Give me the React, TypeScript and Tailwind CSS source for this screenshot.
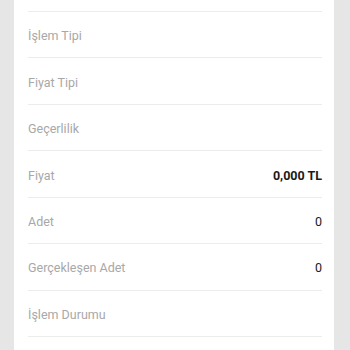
const ROWS = [
  { label: "İşlem Tipi", value: "" },
  { label: "Fiyat Tipi", value: "" },
  { label: "Geçerlilik", value: "" },
  { label: "Fiyat", value: "0,000 TL", bold: true },
  { label: "Adet", value: "0" },
  { label: "Gerçekleşen Adet", value: "0" },
  { label: "İşlem Durumu", value: "" },
];

export default function App() {
  return (
    <div
      className="h-[350px] w-[350px] overflow-hidden bg-[#e6e6e6] px-[14px]"
      style={{ fontFamily: "Roboto, 'Noto Sans', sans-serif" }}
    >
      <div className="h-full w-[320px] bg-white pl-[14px] pr-[12px]">
        {/* tail of the row above */}
        <div className="h-[12px] border-b border-[#ececec]" />
        {ROWS.map((r) => (
          <div
            key={r.label}
            className="flex h-[46.43px] items-center justify-between border-b border-[#ececec] pt-[4px]"
          >
            <span className="text-[12.5px] text-[#a8a8a8]">{r.label}</span>
            {r.value && (
              <span
                className={
                  r.bold
                    ? "text-[12.5px] font-bold text-[#1a1a1a]"
                    : "text-[12.5px] text-[#212121]"
                }
              >
                {r.value}
              </span>
            )}
          </div>
        ))}
      </div>
    </div>
  );
}
